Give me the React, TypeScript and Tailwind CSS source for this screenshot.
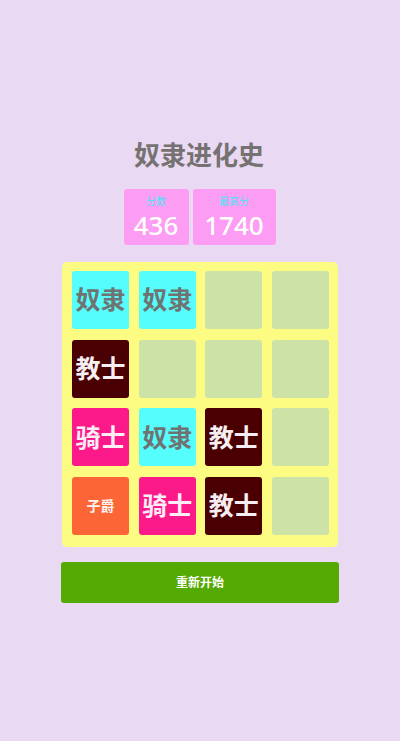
import React from 'react';

type Tile = { label: string; bg: string; text: string } | null;

const slave = { label: '奴隶', bg: 'bg-[#55fdfc]', text: 'text-[#6f7472] text-[25px]' };
const priest = { label: '教士', bg: 'bg-[#4a0003]', text: 'text-[#f6eef0] text-[25px]' };
const knight = { label: '骑士', bg: 'bg-[#fc1a8a]', text: 'text-[#fdeef6] text-[25px]' };
const viscount = { label: '子爵', bg: 'bg-[#fc6636]', text: 'text-[#fff3ee] text-[14px]' };

const board: Tile[] = [
  slave, slave, null, null,
  priest, null, null, null,
  knight, slave, priest, null,
  viscount, knight, priest, null,
];

export default function App() {
  return (
    <div
      className="w-[400px] h-[741px] bg-[#e9d9f3] flex flex-col items-center"
      style={{ fontFamily: '"Noto Sans", "Noto Sans CJK SC", sans-serif' }}
    >
      <h1 className="mt-[136px] h-[38px] text-[26px] leading-[38px] font-bold text-[#767272] ml-[-2px]">奴隶进化史</h1>

      {/* Scores */}
      <div className="mt-[15px] flex gap-[4px] ml-[-1px]">
        <div className="w-[65px] h-[56px] rounded-[3px] bg-[#fd9cf3] flex flex-col items-center">
          <span className="mt-[6px] text-[10px] leading-[12px] text-[#3fe6f6]">分数</span>
          <span className="mt-[3px] text-[26px] leading-[30px] font-medium text-white">436</span>
        </div>
        <div className="w-[83px] h-[56px] rounded-[3px] bg-[#fd9cf3] flex flex-col items-center">
          <span className="mt-[6px] text-[10px] leading-[12px] text-[#3fe6f6]">最高分</span>
          <span className="mt-[3px] text-[26px] leading-[30px] font-medium text-white">1740</span>
        </div>
      </div>

      {/* Board */}
      <div className="mt-[17px] w-[276px] h-[285px] rounded-[5px] bg-[#fdfc82] pl-[10px] pr-[9px] pt-[9px] pb-[12px] grid grid-cols-[repeat(4,57px)] grid-rows-[repeat(4,58px)] justify-between content-between">
        {board.map((tile, i) => (
          <div
            key={i}
            className={`rounded-[3px] flex items-center justify-center ${tile ? tile.bg : 'bg-[#cde2a7]'}`}
          >
            {tile && <span className={`font-semibold ${tile.text}`}>{tile.label}</span>}
          </div>
        ))}
      </div>

      <button
        type="button"
        className="mt-[15px] w-[278px] h-[41px] rounded-[3px] bg-[#55a903] text-white text-[12px] font-semibold"
      >
        重新开始
      </button>
    </div>
  );
}
